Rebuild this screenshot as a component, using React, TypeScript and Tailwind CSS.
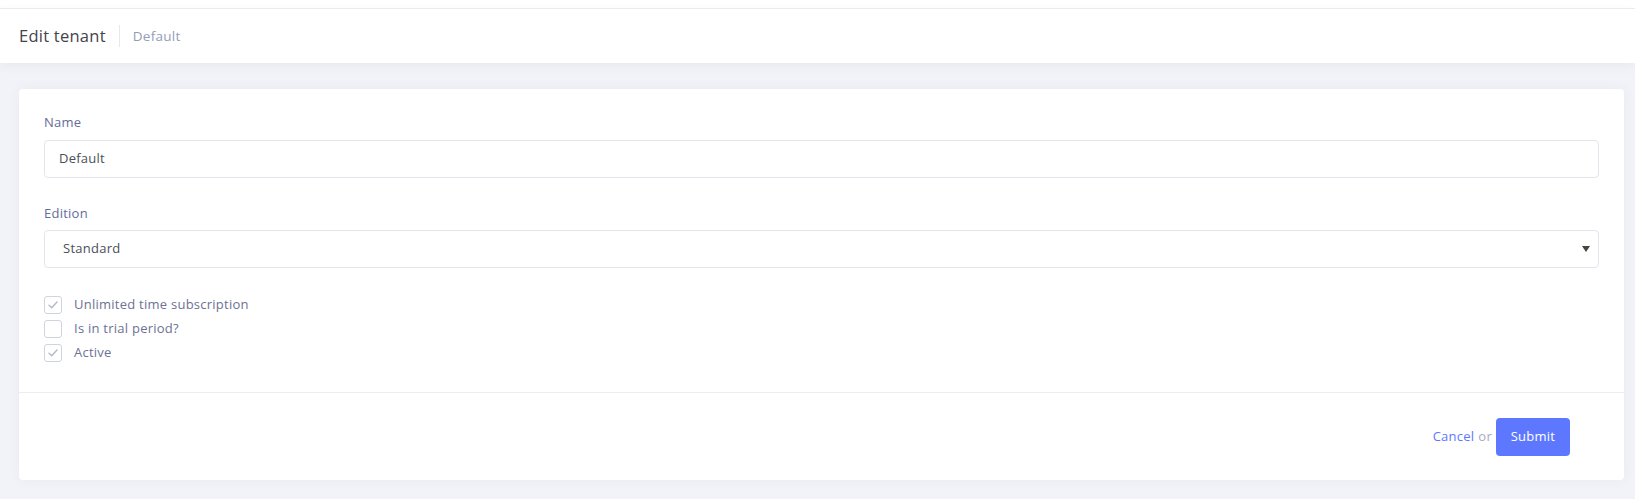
import React from "react";

function Check({ checked }: { checked: boolean }) {
  return (
    <span className="w-[18px] h-[18px] rounded-[3px] border border-[#d1d3e0] bg-white flex items-center justify-center">
      {checked && (
        <svg width="10" height="8" viewBox="0 0 10 8" fill="none">
          <path d="M1 4.2 L3.7 6.8 L9 1" stroke="#b5b8c8" strokeWidth="1.4" strokeLinecap="round" strokeLinejoin="round" />
        </svg>
      )}
    </span>
  );
}

export default function App() {
  const font = { fontFamily: '"Open Sans", "Noto Sans", sans-serif' };
  return (
    <div className="w-[1635px] h-[499px] bg-[#f2f3f8] overflow-hidden tracking-[0.25px]" style={font}>
      <div className="h-[9px] bg-white border-b border-[#ebedf2]" />
      <div className="h-[54px] bg-white flex items-center pl-[19px] shadow-[0_3px_10px_rgba(82,63,105,0.06)]">
        <span className="text-[16.5px] font-medium text-[#434349]">Edit tenant</span>
        <span className="w-px h-[22px] bg-[#e7e8ef] ml-[13px] mr-[13px]" />
        <span className="text-[13.5px] font-medium text-[#959cb6]">Default</span>
      </div>
      <div className="ml-[19px] mr-[11px] mt-[26px] bg-white rounded-[4px] shadow-[0_0_13px_rgba(82,63,105,0.05)]">
        <div className="px-[25px] pt-[24px] pb-[30px]">
          <div className="text-[13px] text-[#646c9a] leading-[19px]">Name</div>
          <div className="mt-[8px] h-[38px] border border-[#e2e5ec] rounded-[4px] flex items-center pl-[14px] text-[13px] text-[#495057]">
            Default
          </div>
          <div className="mt-[26px] text-[13px] text-[#646c9a] leading-[19px]">Edition</div>
          <div className="mt-[7px] h-[38px] border border-[#e2e5ec] rounded-[4px] flex items-center justify-between pl-[18px] pr-[8px] text-[13px] text-[#495057]">
            <span>Standard</span>
            <svg width="8" height="6" viewBox="0 0 8 6"><path d="M0 0 H8 L4 6 Z" fill="#444" /></svg>
          </div>
          <div className="mt-[28px] flex flex-col gap-[6px]">
            {[
              ["Unlimited time subscription", true],
              ["Is in trial period?", false],
              ["Active", true],
            ].map(([label, c]) => (
              <div key={label as string} className="flex items-center gap-[12px] h-[18px]">
                <Check checked={c as boolean} />
                <span className="text-[13px] text-[#6c7293]">{label as string}</span>
              </div>
            ))}
          </div>
        </div>
        <div className="border-t border-[#ebedf2] h-[88px] flex items-center justify-end pr-[54px] text-[13px]">
          <span className="text-[#5d78ff]">Cancel</span>
          <span className="text-[#a7abc3] ml-[4px] mr-[4px]">or</span>
          <button className="h-[38px] w-[74px] rounded-[4px] bg-[#5d78ff] text-white text-[13px]">Submit</button>
        </div>
      </div>
    </div>
  );
}
